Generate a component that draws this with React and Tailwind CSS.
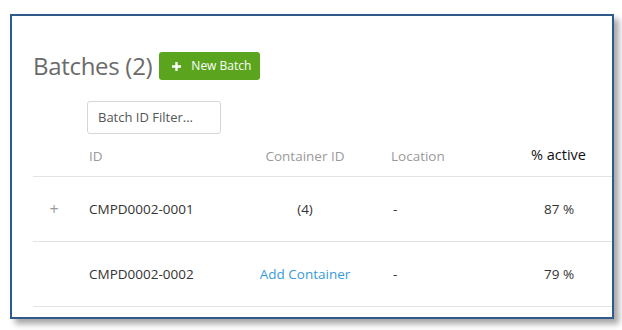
import React from "react";

const rows = [
    { id: "CMPD0002-0001", container: "(4)", location: "-", active: "87 %", expandable: true },
    { id: "CMPD0002-0002", container: null, location: "-", active: "79 %", expandable: false },
];

export default function App() {
    return (
        <div className="w-[622px] h-[330px] bg-white pt-[14px] pl-[10px] pr-[8px]" style={{ fontFamily: "'Open Sans', 'Noto Sans', sans-serif" }}>
            <div className="h-[305px] border-2 border-[#2e5a8c] bg-white shadow-[5px_5px_6px_rgba(0,0,0,0.35)] overflow-hidden">
                <div className="flex items-center gap-[7px] pl-[21px] mt-[36px] h-[28px]">
                    <h1 className="text-[24px] leading-none text-[#6b6b6b] tracking-[-0.3px]">Batches (2)</h1>
                    <button className="flex items-center gap-[10px] h-[28px] w-[101px] pl-[13px] rounded-[3px] bg-[#5aa51d] text-white text-[12px]">
                        <svg width="9" height="9" viewBox="0 0 10 10">
                            <path d="M5 0v10M0 5h10" stroke="white" strokeWidth="2.6" />
                        </svg>
                        <span>New Batch</span>
                    </button>
                </div>
                <div className="mt-[21px] ml-[75px] w-[134px] h-[33px] border border-[#d6d6d6] rounded-[3px] flex items-center pl-[10px] text-[13px] text-[#555]">
                    Batch ID Filter...
                </div>
                <div className="ml-[21px] text-[13.5px]">
                    <div className="grid grid-cols-[56px_150px_132px_140px_1fr] h-[43px] items-end pb-[10px] border-b border-[#e3e3e3]">
                        <div />
                        <div className="text-[#9a9a9a]">ID</div>
                        <div className="text-[#9a9a9a] text-center">Container ID</div>
                        <div className="text-[#9a9a9a] pl-[20px]">Location</div>
                        <div className="text-[#111] text-[14.5px] pl-[20px]">% active</div>
                    </div>
                    {rows.map((r) => (
                        <div key={r.id} className="grid grid-cols-[56px_150px_132px_140px_1fr] h-[65px] items-center border-b border-[#e3e3e3] text-[#333]">
                            <div className="text-center text-[#999] text-[16px] pr-[14px]">{r.expandable ? "+" : ""}</div>
                            <div>{r.id}</div>
                            <div className="text-center">
                                {r.container ? r.container : <span className="text-[#3a9ad9]">Add Container</span>}
                            </div>
                            <div className="pl-[22px]">{r.location}</div>
                            <div className="pl-[33px]">{r.active}</div>
                        </div>
                    ))}
                </div>
            </div>
        </div>
    );
}
